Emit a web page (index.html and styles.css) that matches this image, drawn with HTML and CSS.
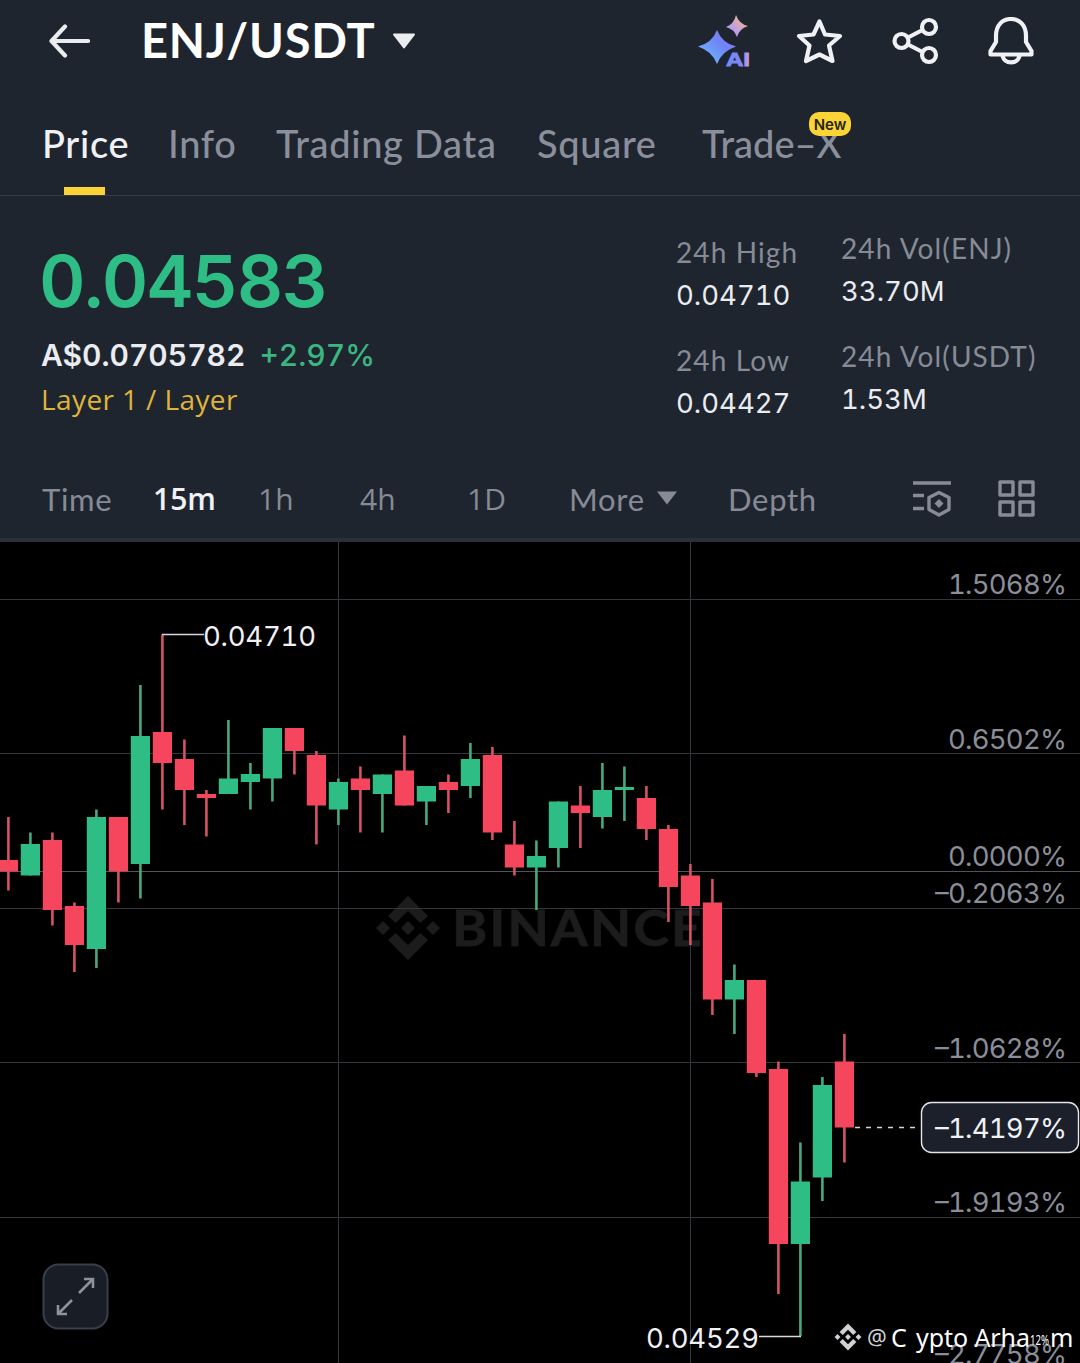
FILE: index.html
```html
<!DOCTYPE html>
<html lang="en">
<head>
  <meta charset="UTF-8" />
  <meta name="viewport" content="width=device-width, initial-scale=1" />
  <title>ENJ/USDT</title>
  <link rel="stylesheet" href="styles.css">
</head>
<body>
  <header class="topbar">
    <svg class="back" width="42" height="34" viewBox="0 0 42 34">
      <path d="M17 2.5 3.5 17 17 31.500M4 17H40" />
    </svg>
    <h1>ENJ/USDT</h1>
    <svg class="caret" width="24" height="17" viewBox="0 0 24 17">
      <path d="M2 1.500H22L12 14.500Z" />
    </svg>
    <div class="actions">
      <svg width="54" height="54" viewBox="0 0 54 54">
        <defs>
          <linearGradient id="blue" x1="0" y1="1" x2="1" y2="0">
            <stop offset="0.2" stop-color="#6cb0fc" />
            <stop offset="0.6" stop-color="#6f84f6" />
            <stop offset="1" stop-color="#9a7df5" />
          </linearGradient>
          <linearGradient id="pink" x1="0" y1="1" x2="1" y2="0">
            <stop offset="0.3" stop-color="#b79cf0" />
            <stop offset="0.8" stop-color="#f0b397" />
          </linearGradient>
          <linearGradient id="aitext">
            <stop offset="0" stop-color="#6f8cf8" />
            <stop offset="0.6" stop-color="#7f86f4" />
            <stop offset="1" stop-color="#c99fe6" />
          </linearGradient>
        </defs>
        <path fill="url(#blue)" d="M21 16Q26 29 40 32.500Q26 37 21 50Q16 37 2 32.500Q16 29 21 16Z" />
        <path fill="url(#pink)" d="M40 1Q43 10 52 12Q43 15 41 23Q38 15 30 13Q38 10 40 1Z" />
        <text class="ai" x="30" y="52" textLength="24" lengthAdjust="spacingAndGlyphs">AI</text>
      </svg>
      <svg class="line" width="48" height="48" viewBox="0 0 48 48">
        <path d="M24.500 4.500 30 17.500 45 19 34 28.500 37.500 44 24.500 37.500 11 44 14.500 28.500 4 19 18.500 17.500Z" />
      </svg>
      <svg class="line" width="48" height="48" viewBox="0 0 48 48">
        <circle cx="10.500" cy="24" r="7" />
        <circle cx="38" cy="10" r="7" />
        <circle cx="38" cy="38" r="7" />
        <path d="M17 20.500 31.500 13M17 27.500 31.500 35" />
      </svg>
      <svg class="line" width="48" height="48" viewBox="0 0 48 48">
        <path d="M9 19C9 8 15.500 2 24 2S39 8 39 19V25L44.500 34V37.500H3.500V34L9 25ZM15.500 39C18 47.500 30 47.500 32.500 39" />
      </svg>
    </div>
  </header>

  <nav class="tabs">
    <span class="active">Price</span>
    <span>Info</span>
    <span>Trading Data</span>
    <span>Square</span>
    <span class="tradex">Trade–X<b class="new">New</b></span>
  </nav>

  <section class="summary">
    <div class="quote">
      <div class="last num">0.04583</div>
      <div class="fiat num"><span>A$0.0705782</span><span class="up">+2.97%</span></div>
      <div class="tag">Layer 1 / Layer</div>
    </div>
    <div class="stats">
      <div class="label">24h High</div>
      <div class="value num">0.04710</div>
      <div class="label">24h Low</div>
      <div class="value num">0.04427</div>
    </div>
    <div class="stats right">
      <div class="label">24h Vol(ENJ)</div>
      <div class="value num">33.70M</div>
      <div class="label">24h Vol(USDT)</div>
      <div class="value num">1.53M</div>
    </div>
  </section>

  <nav class="frames">
    <span>Time</span>
    <span class="active short">15m</span>
    <span class="short">1h</span>
    <span class="short">4h</span>
    <span class="short">1D</span>
    <span>More<svg class="more" width="20" height="14" viewBox="0 0 20 14"><path d="M0 .5H20L10 13.500Z" /></svg></span>
    <span>Depth</span>
    <svg class="tool" width="40" height="38" viewBox="0 0 40 38">
      <path d="M1 3H39M1 15.500H12M1 28.500H12M27 12.500 37 17.500V29.500L27 35 17 29.500V17.500Z" />
      <path class="solid" d="M27 19 31.500 23.500 27 28 22.500 23.500Z" />
    </svg>
    <svg class="tool" width="38" height="38" viewBox="0 0 38 38">
      <rect x="2" y="2" width="13" height="13" />
      <rect x="22" y="2" width="13" height="13" />
      <rect x="2" y="22" width="13" height="13" />
      <rect x="22" y="22" width="13" height="13" />
    </svg>
  </nav>

  <svg class="chart" width="1080" height="821" viewBox="0 542 1080 821">
    <g class="watermark">
      <g transform="translate(408 928)">
        <path d="M0-32 20-12 12.500-5 0-17-12.500-5-20-12ZM0 32 20 12 12.500 5 0 17-12.500 5-20 12ZM0-7 7 0 0 7-7 0ZM-25-7-18 0-25 7-32 0ZM25-7 32 0 25 7 18 0Z" />
      </g>
      <text x="452" y="946" textLength="252" lengthAdjust="spacingAndGlyphs">BINANCE</text>
    </g>
    <g class="grid">
      <path d="M338.500 542V1363M690.500 542V1363M0 599.500H1080M0 753.500H1080M0 908.500H1080M0 1062.500H1080M0 1217.500H1080" />
      <path class="zero" d="M0 871.500H1080" />
    </g>
    <g id="candles"></g>
    <g class="marks">
      <path d="M162 634.500H204M759 1336.500H801" />
      <path class="dash" d="M855 1127.500H921" />
      <text x="203" y="646" textLength="113">0.04710</text>
      <text x="646" y="1348" textLength="113">0.04529</text>
    </g>
    <g class="axis">
      <text x="948" y="594" textLength="119">1.5068%</text>
      <text x="948" y="749" textLength="119">0.6502%</text>
      <text x="948" y="866" textLength="119">0.0000%</text>
      <text x="935" y="903" textLength="132">–0.2063%</text>
      <text x="935" y="1058" textLength="132">–1.0628%</text>
      <text x="935" y="1212" textLength="132">–1.9193%</text>
      <text x="935" y="1364" textLength="132">–2.7758%</text>
    </g>
    <g class="current">
      <rect x="921.500" y="1102.500" width="157" height="50" rx="10" />
      <text x="935" y="1138" textLength="132">–1.4197%</text>
    </g>
    <g class="expand">
      <rect x="43.500" y="1264.500" width="64" height="64" rx="15" />
      <path d="M79 1293 93 1279M84 1279H93V1288M72 1300 58 1314M58 1305V1314H67" />
    </g>
    <g class="author">
      <g transform="translate(848 1337) scale(.42)">
        <path d="M0-32 20-12 12.500-5 0-17-12.500-5-20-12ZM0 32 20 12 12.500 5 0 17-12.500 5-20 12ZM0-7 7 0 0 7-7 0ZM-25-7-18 0-25 7-32 0ZM25-7 32 0 25 7 18 0Z" />
      </g>
      <text class="at" x="867" y="1345">@</text>
      <text x="891" y="1347">C</text>
      <text x="916" y="1347" textLength="114">ypto Arha</text>
      <text class="tiny" x="1030" y="1345" textLength="19" lengthAdjust="spacingAndGlyphs">12%</text>
      <text x="1050" y="1347">m</text>
    </g>
  </svg>

  <script>
    // [high, body top, body bottom, low, up]
    const candles = [
      [817, 860, 871.5, 890.5, 0],
      [832.5, 844, 875.5, 875.5, 1],
      [832.5, 840, 910, 925.5, 0],
      [902.5, 906, 945, 972, 0],
      [809.5, 817, 949, 968, 1],
      [817, 817, 871.5, 902.5, 0],
      [685, 736, 864, 898.5, 1],
      [634.5, 732, 763, 809.5, 0],
      [739.5, 759, 790, 825, 0],
      [790, 794, 798, 836.5, 0],
      [720, 778.5, 794, 794, 1],
      [763, 774, 782, 809.5, 1],
      [728, 728, 778.5, 801.5, 1],
      [728, 728, 751, 774.5, 0],
      [751, 755, 805.5, 844.5, 0],
      [778.5, 782, 809.5, 825, 1],
      [766.5, 778.5, 790, 832.5, 0],
      [774.5, 774.5, 794, 832.5, 1],
      [735.5, 770.5, 805.5, 805.5, 0],
      [786, 786, 801.5, 825, 1],
      [774.5, 782, 790, 813, 0],
      [743, 759, 786, 798, 1],
      [747, 755, 832.5, 840, 0],
      [821, 844.5, 867.5, 875.5, 0],
      [840.5, 856, 867.5, 910, 1],
      [801.5, 801.5, 848, 867.5, 1],
      [786, 805.5, 813, 848, 0],
      [763, 790, 817, 828.5, 1],
      [766.5, 787, 790, 821, 1],
      [786, 798, 829, 840, 0],
      [825, 829, 887, 922, 0],
      [864, 875.5, 906, 945, 0],
      [879, 902.5, 999.5, 1015, 0],
      [964.5, 980, 999.5, 1034, 1],
      [980, 980, 1073, 1077, 0],
      [1061.5, 1069, 1244, 1294, 0],
      [1142.5, 1181.5, 1244, 1336, 1],
      [1077, 1085, 1177.5, 1201, 1],
      [1034, 1061.5, 1127.5, 1162.5, 0]
    ];

    let out = "";
    candles.forEach(([high, top, bottom, low, up], i) => {
      const x = 8.4 + i * 22;
      out += `<g class="${up ? "green" : "red"}">
        <rect class="wick" x="${x - 1.3}" y="${high}" width="2.6" height="${low - high}" />
        <rect x="${x - 9.6}" y="${top}" width="19.200" height="${bottom - top}" />
      </g>`;
    });
    document.getElementById("candles").innerHTML = out;
  </script>
</body>
</html>
```

FILE: styles.css
```css
body {
  margin: 0;
  width: 1080px;
  height: 1363px;
  overflow: hidden;
  background: #1f252f;
  color: #eaecef;
  font-family: Lato, "Open Sans", sans-serif;
}
svg {
  display: block;
  flex-shrink: 0;
}
.num {
  font-family: Inter, "Open Sans", sans-serif;
  font-variant-numeric: tabular-nums;
}

/* top bar */
.topbar {
  display: flex;
  align-items: center;
  height: 82px;
  margin-bottom: -2px;
  padding-left: 48px;
}
.back {
  fill: none;
  stroke: #eaecef;
  stroke-width: 4.2;
  stroke-linecap: round;
  stroke-linejoin: round;
}
h1 {
  width: 234px;
  margin: 0 0 2px 51px;
  font-size: 47px;
  line-height: 60px;
  font-weight: bold;
  letter-spacing: 0.8px;
  color: #fff;
  white-space: nowrap;
}
.caret {
  margin-left: 17px;
  fill: #eaecef;
  stroke: #eaecef;
  stroke-width: 2;
  stroke-linejoin: round;
}
.actions {
  display: flex;
  align-items: center;
  gap: 48px;
  margin-left: auto;
  margin-right: 45px;
}
.actions svg:first-child {
  margin-right: -3px;
  overflow: visible;
}
.line {
  fill: none;
  stroke: #f0f1f5;
  stroke-width: 4.2;
  stroke-linejoin: round;
}
.ai {
  font: bold 18px "Liberation Sans", sans-serif;
  fill: url(#aitext);
  stroke: url(#aitext);
  stroke-width: 0.8;
}

/* tabs */
.tabs {
  display: grid;
  grid-template-columns: 126px 108px 261px 165px 150px;
  grid-template-rows: 115px;
  height: 115px;
  padding-left: 42px;
  border-bottom: 1px solid #343b47;
  font-size: 38px;
  font-weight: 500;
  letter-spacing: 0.7px;
  line-height: 126px;
  color: #8a8f9b;
  white-space: nowrap;
}
.tabs span {
  position: relative;
}
.tabs .active {
  color: #f0f1f5;
}
.tabs .tradex {
  letter-spacing: 0;
}
.tabs .active::after {
  content: "";
  position: absolute;
  left: 22px;
  bottom: 0;
  width: 41px;
  height: 8px;
  background: #fad336;
}
.new {
  position: absolute;
  left: 107px;
  top: 32px;
  width: 42px;
  height: 24px;
  border-radius: 10px;
  background: #fad336;
  color: #28230f;
  font: 600 15px/25px Inter, "Open Sans", sans-serif;
  letter-spacing: 0;
  text-align: center;
}

/* price summary */
.summary {
  display: grid;
  grid-template-columns: 635px 165px 1fr;
  height: 263px;
  padding-left: 41px;
}
.quote {
  padding-top: 35px;
}
.last {
  margin-left: -2px;
  font-size: 72px;
  line-height: 100px;
  font-weight: 600;
  letter-spacing: -1.6px;
  color: #2ebd85;
}
.fiat {
  display: flex;
  gap: 14px;
  font-size: 30px;
  line-height: 48px;
  font-weight: 600;
}
.up {
  color: #3bb681;
  font-weight: 500;
}
.tag {
  font-family: "Open Sans", sans-serif;
  font-size: 28px;
  line-height: 40px;
  letter-spacing: 0.4px;
  color: #dfb43b;
  font-weight: 500;
}
.stats {
  padding-top: 35px;
  font-size: 28px;
  line-height: 43px;
  white-space: nowrap;
}
.stats.right {
  padding-top: 31px;
}
.label {
  color: #868b96;
  letter-spacing: 1.1px;
}
.value {
  margin-bottom: 22px;
  font-size: 27.5px;
}

/* timeframes */
.frames {
  display: grid;
  grid-template-columns: 111px 105px 102px 107px 102px 159px 184px 86px 38px;
  align-items: center;
  height: 79px;
  padding-left: 42px;
  border-bottom: 4px solid #29303c;
  font-size: 31px;
  letter-spacing: 0.7px;
  color: #868b96;
  white-space: nowrap;
}
.frames .short {
  font-family: "Open Sans", sans-serif;
  font-size: 30px;
  letter-spacing: 0;
}
.frames .active {
  color: #f0f1f5;
  font-weight: 600;
}
.more {
  display: inline-block;
  margin-left: 12px;
  vertical-align: 6px;
  fill: #868b96;
}
.tool {
  fill: none;
  stroke: #868b96;
  stroke-width: 3.4;
  stroke-linejoin: round;
}
.tool .solid {
  fill: #868b96;
  stroke: none;
}

/* chart */
.chart {
  background: #000;
  font-family: Inter, "Open Sans", sans-serif;
  font-size: 27.5px;
  font-variant-numeric: tabular-nums;
}
.watermark {
  fill: #1c1c1c;
}
.watermark text {
  font-family: Lato, sans-serif;
  font-size: 49px;
  font-weight: bold;
  letter-spacing: 2px;
  stroke: #1c1c1c;
  stroke-width: 0.8;
}
.grid path {
  fill: none;
  stroke: #33363c;
}
.grid .zero {
  stroke: #50545b;
}
.red {
  fill: #f6465d;
}
.green {
  fill: #2ebd85;
}
.red .wick {
  fill: #d65364;
}
.green .wick {
  fill: #47a97e;
}
.marks path {
  fill: none;
  stroke: #d5d8de;
  stroke-width: 1.6;
}
.marks .dash {
  stroke-dasharray: 5 6;
}
.marks text,
.current text {
  fill: #f0f1f5;
}
.axis {
  fill: #8a8e98;
}
.current rect {
  fill: #1b202a;
  stroke: #e3e5e9;
  stroke-width: 1.4;
}
.expand rect {
  fill: #181d26;
  stroke: #39404c;
  stroke-width: 2;
}
.expand path {
  fill: none;
  stroke: #8f929b;
  stroke-width: 2.6;
}
.author {
  fill: #fff;
  font-family: "Noto Sans", sans-serif;
  font-size: 25px;
}
.author g,
.author .at {
  fill: #d0d1d4;
}
.author .at {
  font-size: 22px;
}
.author .tiny {
  font-size: 14px;
}
```
